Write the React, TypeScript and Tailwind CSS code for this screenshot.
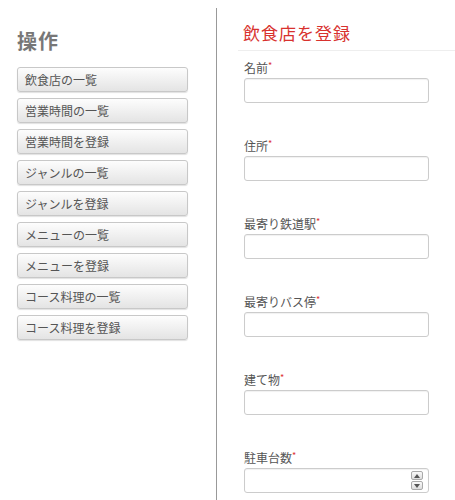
const menu = [
  '飲食店の一覧',
  '営業時間の一覧',
  '営業時間を登録',
  'ジャンルの一覧',
  'ジャンルを登録',
  'メニューの一覧',
  'メニューを登録',
  'コース料理の一覧',
  'コース料理を登録',
];

const fields = [
  { label: '名前', type: 'text' },
  { label: '住所', type: 'text' },
  { label: '最寄り鉄道駅', type: 'text' },
  { label: '最寄りバス停', type: 'text' },
  { label: '建て物', type: 'text' },
  { label: '駐車台数', type: 'number' },
];

const font = { fontFamily: '"Noto Sans CJK JP", "Noto Sans", sans-serif' };

function Spinner() {
  return (
    <div className="absolute right-[6px] top-[3px] flex flex-col gap-[1px]">
      {[0, 1].map((i) => (
        <div
          key={i}
          className="flex h-[9px] w-[12px] items-center justify-center rounded-[2px] border border-[#aaa] bg-gradient-to-b from-[#fafafa] to-[#ddd]"
        >
          <svg width="6" height="4" viewBox="0 0 6 4">
            <path d={i === 0 ? 'M0 4 L3 0 L6 4 Z' : 'M0 0 L3 4 L6 0 Z'} fill="#555" />
          </svg>
        </div>
      ))}
    </div>
  );
}

export default function App() {
  return (
    <div className="flex h-[500px] w-[455px] overflow-hidden bg-white" style={font}>
      <aside className="mt-2 w-[217px] shrink-0 border-r border-[#999] pl-[17px] pt-[21px]">
        <h2 className="text-[20px] font-bold leading-[24px] tracking-[1px] text-[#777]">操作</h2>
        <nav className="mt-[14px] flex w-[171px] flex-col gap-[6px]">
          {menu.map((m) => (
            <button
              key={m}
              className="flex h-[25px] items-center rounded-[3px] border border-[#c8c8c8] bg-gradient-to-b from-[#fdfdfd] to-[#e4e4e4] pl-[7px] text-left text-[12px] text-[#555] shadow-[0_1px_1px_rgba(0,0,0,0.12)]"
            >
              {m}
            </button>
          ))}
        </nav>
      </aside>
      <main className="ml-[21px] flex-1">
        <h1 className="border-b border-[#eee] pb-[6px] pl-[5px] pt-[21px] text-[17px] leading-[23px] tracking-[1px] text-[#d8322e]">
          飲食店を登録
        </h1>
        <div className="flex flex-col pl-[6px] pt-[9px]">
          {fields.map((f) => (
            <div key={f.label} className="mb-[35px] flex flex-col">
              <label className="block h-[16px] text-[12px] leading-[16px] text-[#555]">
                {f.label}
                <span className="align-top text-[9px] leading-[12px] text-[#d33]">*</span>
              </label>
              <div className="relative mt-[2px] h-[25px] w-[185px]">
                <input
                  type="text"
                  className="h-full w-full rounded-[3px] border border-[#ccc] bg-white shadow-[inset_0_1px_1px_rgba(0,0,0,0.06)] outline-none"
                />
                {f.type === 'number' && <Spinner />}
              </div>
            </div>
          ))}
        </div>
      </main>
    </div>
  );
}
